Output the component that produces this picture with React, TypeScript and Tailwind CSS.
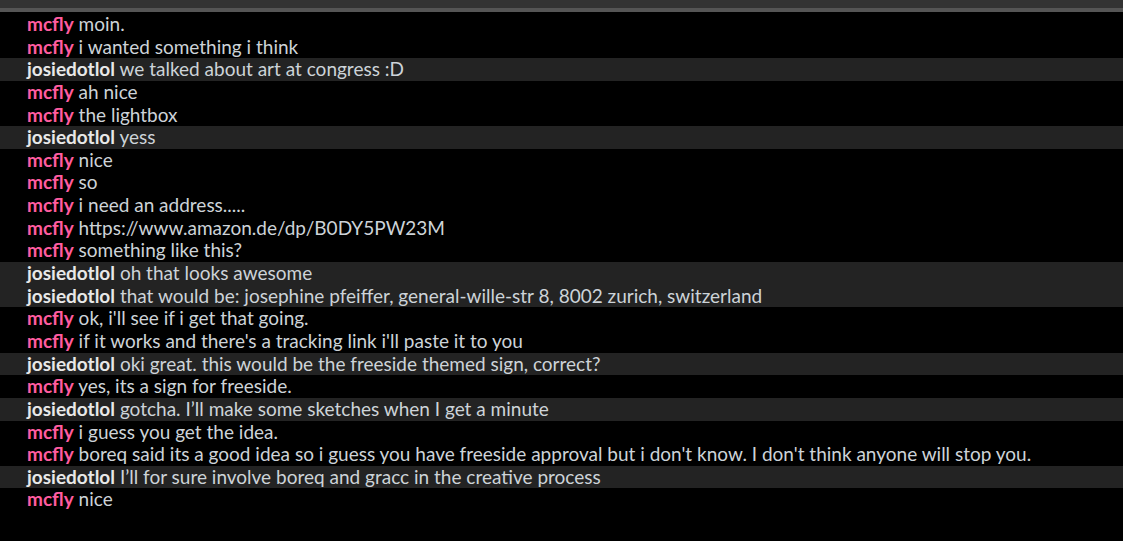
type Message = {
  nick: string;
  text: string;
};

const messages: Message[] = [
  { nick: "mcfly", text: "moin." },
  { nick: "mcfly", text: "i wanted something i think" },
  { nick: "josiedotlol", text: "we talked about art at congress :D" },
  { nick: "mcfly", text: "ah nice" },
  { nick: "mcfly", text: "the lightbox" },
  { nick: "josiedotlol", text: "yess" },
  { nick: "mcfly", text: "nice" },
  { nick: "mcfly", text: "so" },
  { nick: "mcfly", text: "i need an address....." },
  { nick: "mcfly", text: "https://www.amazon.de/dp/B0DY5PW23M" },
  { nick: "mcfly", text: "something like this?" },
  { nick: "josiedotlol", text: "oh that looks awesome" },
  {
    nick: "josiedotlol",
    text: "that would be: josephine pfeiffer, general-wille-str 8, 8002 zurich, switzerland",
  },
  { nick: "mcfly", text: "ok, i'll see if i get that going." },
  { nick: "mcfly", text: "if it works and there's a tracking link i'll paste it to you" },
  { nick: "josiedotlol", text: "oki great. this would be the freeside themed sign, correct?" },
  { nick: "mcfly", text: "yes, its a sign for freeside." },
  { nick: "josiedotlol", text: "gotcha. I’ll make some sketches when I get a minute" },
  { nick: "mcfly", text: "i guess you get the idea." },
  {
    nick: "mcfly",
    text: "boreq said its a good idea so i guess you have freeside approval but i don't know. I don't think anyone will stop you.",
  },
  { nick: "josiedotlol", text: "I’ll for sure involve boreq and gracc in the creative process" },
  { nick: "mcfly", text: "nice" },
];

export default function App() {
  return (
    <div className="flex h-[541px] w-[1123px] flex-col overflow-hidden bg-black font-['Lato',sans-serif]">
      <div className="h-[8px] shrink-0 bg-[#333333]" />
      <div className="h-[4px] shrink-0 bg-[#555555]" />
      <div className="flex flex-col pt-[1px]">
        {messages.map((m, i) => {
          const mine = m.nick === "mcfly";
          return (
            <div
              key={i}
              className={`h-[22.65px] whitespace-nowrap pl-[27px] text-[19px] leading-[22.65px] ${
                mine ? "" : "bg-[#232323]"
              }`}
            >
              <span
                className={
                  mine ? "font-bold text-[#ff5c9f]" : "font-bold text-[#e8e8e8]"
                }
              >
                {m.nick}
              </span>{" "}
              <span className="text-[#cdd3d8]">{m.text}</span>
            </div>
          );
        })}
      </div>
    </div>
  );
}
